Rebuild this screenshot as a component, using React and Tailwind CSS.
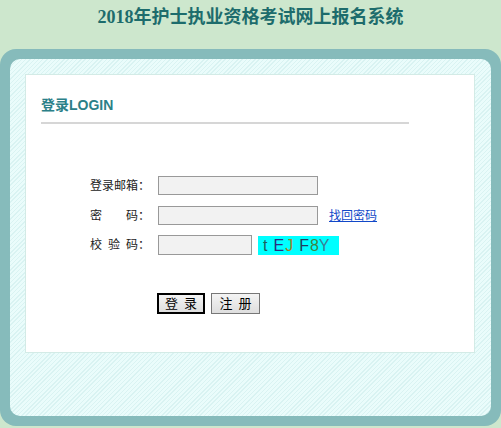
export default function App() {
  const cjk = { fontFamily: '"Liberation Sans","Noto Sans CJK SC",sans-serif' };
  return (
    <div className="w-[501px] h-[428px] bg-[#cde7cd] flex flex-col overflow-hidden">
      <div
        className="h-[49px] flex justify-center text-[18px] font-bold leading-[34px] text-[#1d6c6c]"
        style={{ fontFamily: '"Liberation Serif","Noto Sans CJK SC",serif' }}
      >
        2018年护士执业资格考试网上报名系统
      </div>
      <div className="h-[377px] rounded-[16px] bg-[#86bbbb] p-[10px]">
        <div
          className="h-full rounded-[10px] pt-[15px] pl-[15px] pr-[16px]"
          style={{
            backgroundImage:
              'repeating-linear-gradient(135deg, #eafcfb 0px, #eafcfb 2px, #d9f3f2 2px, #d9f3f2 3px)',
          }}
        >
          <div className="w-[450px] h-[279px] bg-white border border-[#d3ebe6]" style={cjk}>
            <div className="pl-[15px] pt-[22px] text-[14px] leading-[16px] font-bold text-[#2b8088]">
              登录LOGIN
            </div>
            <div className="ml-[15px] mt-[9px] w-[368px] h-[2px] bg-[#d6d6d6]" />
            <div className="pl-[64px] mt-[52px] flex flex-col gap-[11px] text-[12px] text-[#222]">
              <div className="flex items-center h-[19px]">
                <div className="w-[60px] flex">
                  <span>登录邮箱</span>
                  <span className="w-[12px]">：</span>
                </div>
                <div className="ml-[8px] w-[160px] h-[19px] border border-[#999] bg-[#f2f2f2]" />
              </div>
              <div className="flex items-center h-[19px]">
                <div className="w-[60px] flex">
                  <span className="w-[12px]">密</span>
                  <span className="ml-[24px] w-[12px]">码</span>
                  <span className="w-[12px]">：</span>
                </div>
                <div className="ml-[8px] w-[160px] h-[19px] border border-[#999] bg-[#f2f2f2]" />
                <a className="ml-[11px] text-[#1148c8] underline leading-[14px]" href="#">
                  找回密码
                </a>
              </div>
              <div className="flex items-center h-[20px] -mt-[1px]">
                <div className="w-[60px] flex">
                  <span className="w-[12px]">校</span>
                  <span className="ml-[6px] w-[12px]">验</span>
                  <span className="ml-[6px] w-[12px]">码</span>
                  <span className="w-[12px]">：</span>
                </div>
                <div className="ml-[8px] w-[94px] h-[20px] border border-[#999] bg-[#f2f2f2]" />
                <div
                  className="ml-[6px] w-[81px] h-[19px] bg-[#00ffff] flex items-center pl-[5px] text-[16px] leading-[19px]"
                  style={{ fontFamily: '"Liberation Sans",sans-serif' }}
                >
                  <span className="text-[#1f5e5e]">t</span>
                  <span className="ml-[6px] text-[#2c2c80]">E</span>
                  <span className="ml-[1px] text-[#a07e22]">J</span>
                  <span className="ml-[6px] text-[#223e5e]">F</span>
                  <span className="ml-[1px] text-[#3f8542]">8</span>
                  <span className="text-[#3a7f96]">Y</span>
                </div>
              </div>
            </div>
            <div className="pl-[131px] mt-[38px] flex items-center text-[13px] text-black">
              <div className="w-[48px] h-[21px] border-2 border-black bg-gradient-to-b from-[#f4f4f4] to-[#dedede] flex items-center justify-center tracking-[6px] pl-[6px]">
                登录
              </div>
              <div className="ml-[6px] w-[49px] h-[21px] border border-[#777] bg-gradient-to-b from-[#f4f4f4] to-[#dedede] flex items-center justify-center tracking-[6px] pl-[6px]">
                注册
              </div>
            </div>
          </div>
        </div>
      </div>
    </div>
  );
}
